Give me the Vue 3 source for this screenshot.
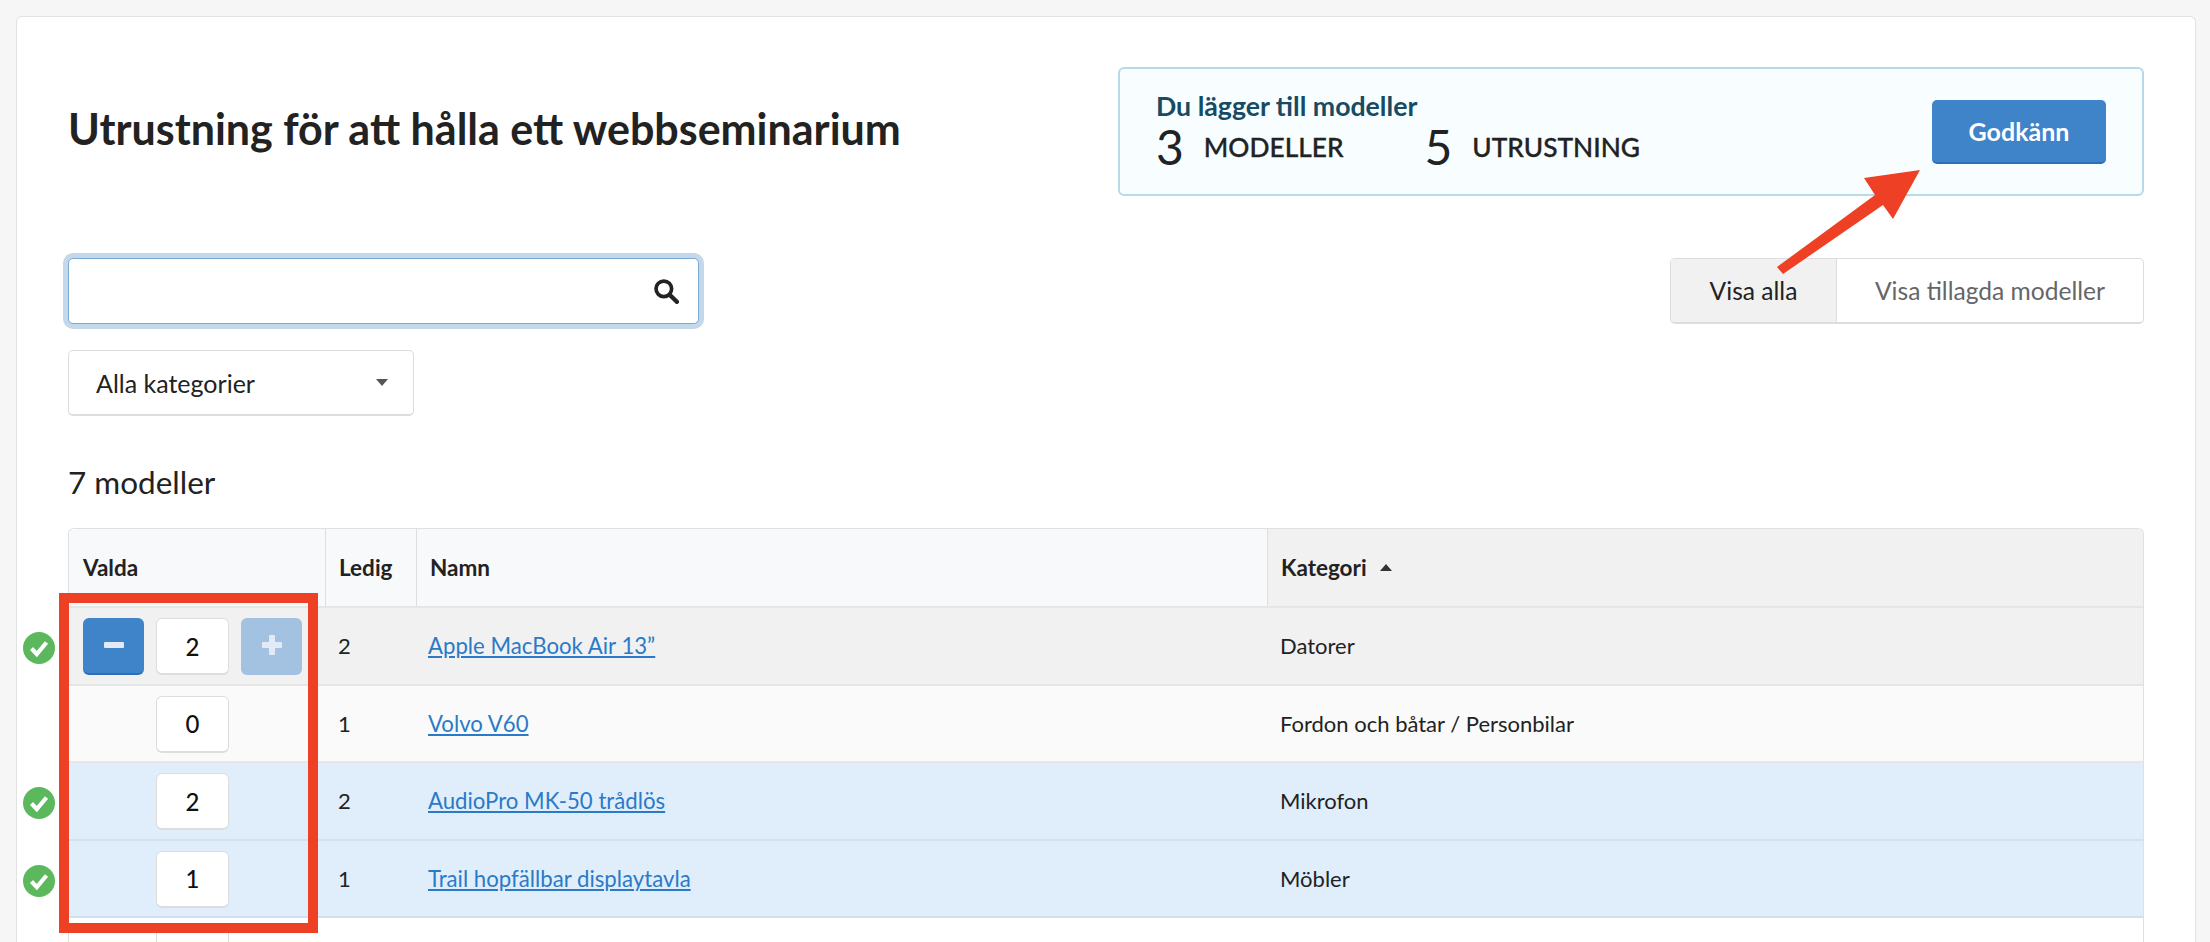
<script setup>
const rows = [
  { qty: 2, free: 2, name: 'Apple MacBook Air 13”', cat: 'Datorer', cls: 'active', ok: true, ctl: true },
  { qty: 0, free: 1, name: 'Volvo V60', cat: 'Fordon och båtar / Personbilar', cls: 'plain', ok: false },
  { qty: 2, free: 2, name: 'AudioPro MK-50 trådlös', cat: 'Mikrofon', cls: 'picked', ok: true },
  { qty: 1, free: 1, name: 'Trail hopfällbar displaytavla', cat: 'Möbler', cls: 'picked', ok: true },
  { qty: '', free: '', name: '', cat: '', cls: 'last', ok: false }
]
</script>

<template>
  <div class="page">
    <main class="card">
      <header class="head">
        <h1 class="title">Utrustning för att hålla ett webbseminarium</h1>
        <section class="notice">
          <div class="summary">
            <div class="lead">Du lägger till modeller</div>
            <div class="stats">
              <span class="stat"><b class="num">3</b><span class="lbl">MODELLER</span></span>
              <span class="stat"><b class="num">5</b><span class="lbl">UTRUSTNING</span></span>
            </div>
          </div>
          <button class="approve">Godkänn</button>
        </section>
      </header>

      <div class="tools">
        <div class="filters">
          <div class="search">
            <svg class="search-ico" viewBox="0 0 24 24" width="26" height="26">
              <circle cx="10" cy="10" r="7.2" fill="none" stroke="#222" stroke-width="3.4" />
              <path d="M15.4 15.4 22 22" stroke="#222" stroke-width="4" stroke-linecap="round" />
            </svg>
          </div>
          <div class="select">
            <span>Alla kategorier</span>
            <i class="caret"></i>
          </div>
        </div>
        <div class="toggle">
          <span class="opt on">Visa alla</span>
          <span class="opt">Visa tillagda modeller</span>
        </div>
      </div>

      <h2 class="count">7 modeller</h2>

      <div class="table">
        <div class="row th">
          <div class="c c1">Valda</div>
          <div class="c c2">Ledig</div>
          <div class="c c3">Namn</div>
          <div class="c c4 sorted">Kategori <i class="up"></i></div>
        </div>
        <div v-for="(r, i) in rows" :key="i" class="row" :class="r.cls">
          <div class="c c1 qty">
            <svg v-if="r.ok" class="ok" viewBox="0 0 32 32" width="32" height="32">
              <circle cx="16" cy="16" r="16" fill="#5cb85c" />
              <path d="M8.5 16.5 13.8 22 23.5 10.5" fill="none" stroke="#fff" stroke-width="4.2" />
            </svg>
            <button v-if="r.ctl" class="step minus"><i></i></button>
            <div class="box">{{ r.qty }}</div>
            <button v-if="r.ctl" class="step plus"><i></i><i class="v"></i></button>
          </div>
          <div class="c c2">{{ r.free }}</div>
          <div class="c c3"><a v-if="r.name" href="#" class="link">{{ r.name }}</a></div>
          <div class="c c4">{{ r.cat }}</div>
        </div>
      </div>
    </main>

    <div class="redbox"></div>
    <svg class="arrow" viewBox="1777 170 143 104" width="143" height="104">
      <polygon points="1920,170 1864,178 1875,195 1777,267 1783,274 1883,205 1893,219" fill="#ee4024" />
    </svg>
  </div>
</template>

<style>
html, body { margin: 0; background: #f6f6f6; height: 942px; overflow: hidden; }
</style>

<style scoped>
.page { position: relative; height: 942px; overflow: hidden; font-family: Lato, sans-serif; font-size: 22px; color: #222; padding-top: 16px; box-sizing: border-box; }
.card { margin: 0 14px 0 16px; background: #fff; border: 1px solid #e2e2e2; border-bottom: 0; border-radius: 6px 6px 0 0; padding: 50px 51px 0; height: 1000px; box-sizing: border-box; }
.head { display: flex; justify-content: space-between; align-items: center; height: 129px; }
.title { margin: 0 0 6px; font-size: 43px; font-weight: 700; color: #222; line-height: 48px; }
.notice { width: 1026px; height: 129px; box-sizing: border-box; background: #f8feff; border: 2px solid #b7dbe6; border-radius: 6px; display: flex; align-items: center; justify-content: space-between; padding: 0 36px; }
.summary { padding-top: 1px; }
.lead { font-size: 26.7px; font-weight: 700; color: #174b63; line-height: 30px; }
.stats { display: flex; gap: 81px; line-height: 52px; height: 52px; }
.stat { display: flex; align-items: center; gap: 20px; }
.num { font-size: 48px; font-weight: 400; color: #222; line-height: 52px; }
.lbl { font-size: 26.3px; font-weight: 500; color: #222; -webkit-text-stroke: 0.35px #222; }
.approve { width: 174px; height: 64px; border: 0; border-bottom: 2px solid #2a6fb8; border-radius: 5px; background: #3f83c9; color: #fff; font: 700 25px Lato, sans-serif; padding: 0; }
.tools { display: flex; justify-content: space-between; align-items: flex-start; margin-top: 62px; }
.filters { display: flex; flex-direction: column; gap: 26px; align-items: flex-start; }
.search { width: 631px; height: 66px; box-sizing: border-box; background: #fff; border: 1px solid #7aa9d4; border-radius: 5px; box-shadow: 0 0 0 5px #c3d8ea; display: flex; align-items: center; justify-content: flex-end; padding-right: 19px; }
.select { width: 346px; height: 66px; box-sizing: border-box; background: #fff; border: 1px solid #ddd; border-bottom-width: 2px; border-radius: 5px; display: flex; align-items: center; justify-content: space-between; padding: 0 25px 0 27px; font-size: 25px; color: #222; }
.caret { width: 0; height: 0; border-left: 6.5px solid transparent; border-right: 6.5px solid transparent; border-top: 7px solid #555; }
.toggle { display: flex; width: 474px; height: 66px; box-sizing: border-box; border: 1px solid #ddd; border-bottom-width: 2px; border-radius: 5px; overflow: hidden; font-size: 24.6px; }
.opt { display: flex; align-items: center; justify-content: center; flex: 1; color: #666; }
.opt.on { flex: 0 0 165px; background: #f1f1f1; color: #222; border-right: 1px solid #ddd; }
.count { margin: 48px 0 28px; font-size: 31.5px; font-weight: 400; line-height: 36px; color: #222; }
.table { border: 1px solid #e0e0e0; border-bottom: 0; border-radius: 6px 6px 0 0; overflow: visible; }
.row { display: flex; height: 77.5px; border-bottom: 2px solid #e6e6e6; box-sizing: border-box; align-items: stretch; }
.row.th { height: 79px; background: #f8f9fb; font-weight: 700; border-radius: 6px 6px 0 0; font-size: 22.5px; }
.c { display: flex; align-items: center; padding-left: 13px; box-sizing: border-box; }
.c1 { width: 256px; }
.c2 { width: 91px; }
.c3 { width: 851px; }
.c4 { flex: 1; padding-left: 13px; }
.th .c { padding-left: 14px; }
.th .c2, .th .c3, .th .c4 { border-left: 1px solid #dedede; }
.th .c2 { padding-left: 13px; }
.th .c3 { padding-left: 13px; }
.th .c4 { padding-left: 13px; }
.sorted { background: #f1f1f1; gap: 0; white-space: pre; border-radius: 0 6px 0 0; }
.up { width: 0; height: 0; margin-left: 8px; border-left: 6.5px solid transparent; border-right: 6.5px solid transparent; border-bottom: 7px solid #333; }
.active { background: #f1f1f1; }
.plain { background: #fafafa; }
.picked { background: #e0eefb; border-bottom-color: #d3e1ee; }
.last { background: #fff; }
.qty { position: relative; padding-left: 14px; gap: 13px; }
.ok { position: absolute; left: -46px; top: 24px; }
.box { position: absolute; left: 87px; top: 10px; width: 73px; height: 57px; box-sizing: border-box; background: #fff; border: 1px solid #ddd; border-bottom-width: 2px; border-radius: 6px; display: flex; align-items: center; justify-content: center; font-size: 24px; font-weight: 500; color: #111; }
.step { position: absolute; top: 10px; width: 61px; height: 57px; border: 0; border-radius: 6px; padding: 0; }
.step i { position: absolute; left: 21px; top: 24px; width: 20px; height: 6px; background: #e2ebf5; border-radius: 1px; }
.step i.v { left: 28px; top: 17px; width: 6px; height: 20px; }
.minus { left: 14px; background: #3f83c9; border-bottom: 2px solid #2a6fb8; }
.plus { left: 172px; background: #a3c1e0; }
.link { color: #2a7ac8; text-decoration: underline; font-size: 22.2px; margin-left: -1px; }
.redbox { position: absolute; left: 59px; top: 593px; width: 259px; height: 340px; box-sizing: border-box; border: 10px solid #ee4024; }
.arrow { position: absolute; left: 1777px; top: 170px; pointer-events: none; }
</style>
